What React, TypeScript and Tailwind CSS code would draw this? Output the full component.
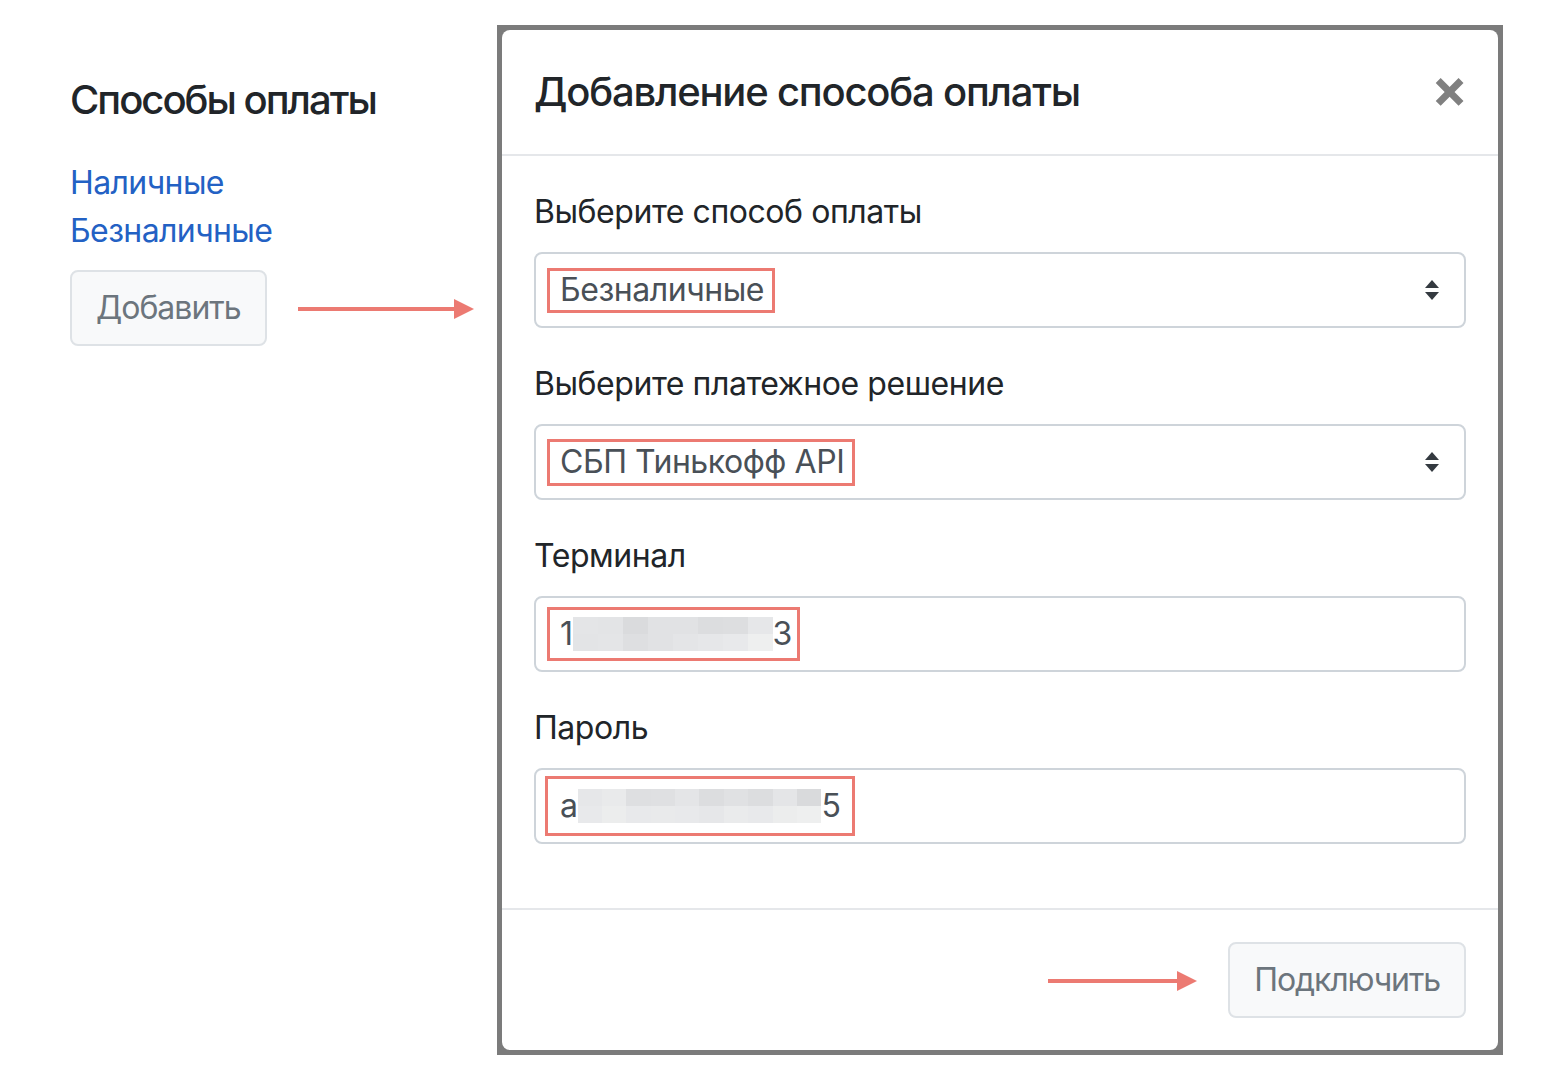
import React from 'react';

const font = { fontFamily: 'Inter, "Noto Sans", sans-serif' };

const Arrow = ({ width }: { width: number }) => (
  <svg width={width} height="22" viewBox={`0 0 ${width} 22`}>
    <rect x="0" y="9" width={width - 18} height="4" fill="#ec7a72" />
    <polygon points={`${width - 20},1 ${width},11 ${width - 20},21`} fill="#ec7a72" />
  </svg>
);

const SelectCaret = () => (
  <svg width="16" height="20" viewBox="0 0 16 20" className="shrink-0">
    <polygon points="8,0 15,8 1,8" fill="#343a40" />
    <polygon points="1,12 15,12 8,20" fill="#343a40" />
  </svg>
);

// pixelated blur over hidden credentials
const Pixels = ({ cols, cell, shades }: { cols: number; cell: number; shades: string[] }) => (
  <div className="grid grid-rows-2 h-[34px]" style={{ gridTemplateColumns: `repeat(${cols}, ${cell}px)` }}>
    {shades.map((c, i) => (
      <div key={i} style={{ backgroundColor: c }} />
    ))}
  </div>
);

const Field = ({ label, children, select }: { label: string; children: React.ReactNode; select?: boolean }) => (
  <div className="mb-[32px]">
    <div className="text-[32px] leading-[48px] tracking-[-0.45px] text-[#212529] mb-[16px]">{label}</div>
    <div className="h-[76px] border-2 border-[#ced4da] rounded-[8px] flex items-center pl-[11px] pr-[24px] text-[32px] tracking-[-0.45px] text-[#495057]">
      <div className="flex-1 flex items-center">{children}</div>
      {select && <SelectCaret />}
    </div>
  </div>
);

export default function App() {
  return (
    <div className="w-[1568px] h-[1086px] bg-white flex pt-[25px]" style={font}>
      {/* page */}
      <div className="w-[497px] pl-[70px] pt-[45px]">
        <h2 className="text-[40px] leading-[60px] font-medium tracking-[-2px] text-[#212529] mb-[29px]">Способы оплаты</h2>
        <div className="text-[32px] leading-[48px] tracking-[-0.6px] text-[#2361c4]">
          <div>Наличные</div>
          <div>Безналичные</div>
        </div>
        <div className="flex items-center mt-[15px]">
          <button className="h-[76px] px-[24px] border-2 border-[#dee2e6] bg-[#f8f9fa] rounded-[8px] text-[32px] tracking-[-1px] text-[#6c757d]">
            Добавить
          </button>
          <div className="ml-[31px] mt-[2px]">
            <Arrow width={176} />
          </div>
        </div>
      </div>

      {/* modal */}
      <div className="w-[1006px] h-[1030px] bg-[#7b7b7b] p-[5px]">
        <div className="h-full bg-white rounded-[8px] flex flex-col">
          <div className="h-[126px] pl-[32px] pr-[30px] flex items-center justify-between border-b-2 border-[#e5e7ea]">
            <h1 className="text-[40px] leading-[60px] font-medium tracking-[-1.2px] text-[#212529]">Добавление способа оплаты</h1>
            <span className="text-[54px] font-bold text-[#808080] leading-none mt-[-8px]">×</span>
          </div>

          <div className="px-[32px] pt-[32px] pb-[32px]">
            <Field label="Выберите способ оплаты" select>
              <div className="border-[3px] border-[#ec7a72] h-[45px] flex items-center pl-[10px] pr-[8px]">Безналичные</div>
            </Field>
            <Field label="Выберите платежное решение" select>
              <div className="border-[3px] border-[#ec7a72] h-[47px] flex items-center pl-[10px] pr-[8px]">СБП Тинькофф API</div>
            </Field>
            <Field label="Терминал">
              <div className="border-[3px] border-[#ec7a72] h-[54px] flex items-center pl-[10px] pr-[5px]">
                <span>1</span>
                <Pixels
                  cols={8}
                  cell={25}
                  shades={[
                    '#e4e5e7', '#e3e4e6', '#dadbdd', '#e1e2e4', '#e1e2e4', '#dcdddf', '#dddee0', '#e6e7e9',
                    '#e3e4e6', '#e4e5e7', '#dedfe1', '#e1e2e4', '#e4e5e7', '#e6e7e9', '#e8e9eb', '#eeefef',
                  ]}
                />
                <span>3</span>
              </div>
            </Field>
            <Field label="Пароль">
              <div className="border-[3px] border-[#ec7a72] h-[60px] flex items-center pl-[12px] pr-[12px] ml-[-2px]">
                <span>a</span>
                <Pixels
                  cols={10}
                  cell={24.4}
                  shades={[
                    '#e6e7e9', '#e9eaeb', '#dedfe1', '#dfe0e2', '#e4e5e7', '#dcdddf', '#e0e1e3', '#dcdddf', '#e4e5e7', '#d9dadc',
                    '#e8e9eb', '#eceded', '#e8e9eb', '#e9eaeb', '#e8e9eb', '#e6e7e9', '#eaebec', '#e8e9eb', '#eceded', '#eeefef',
                  ]}
                />
                <span>5</span>
              </div>
            </Field>
          </div>

          <div className="mt-auto border-t-2 border-[#e5e7ea] h-[142px] flex items-center justify-end px-[32px]">
            <div className="mr-[31px] mt-[2px]">
              <Arrow width={149} />
            </div>
            <button className="h-[76px] px-[24px] border-2 border-[#dee2e6] bg-[#f8f9fa] rounded-[8px] text-[32px] tracking-[-1.1px] text-[#6c757d]">
              Подключить
            </button>
          </div>
        </div>
      </div>
    </div>
  );
}
